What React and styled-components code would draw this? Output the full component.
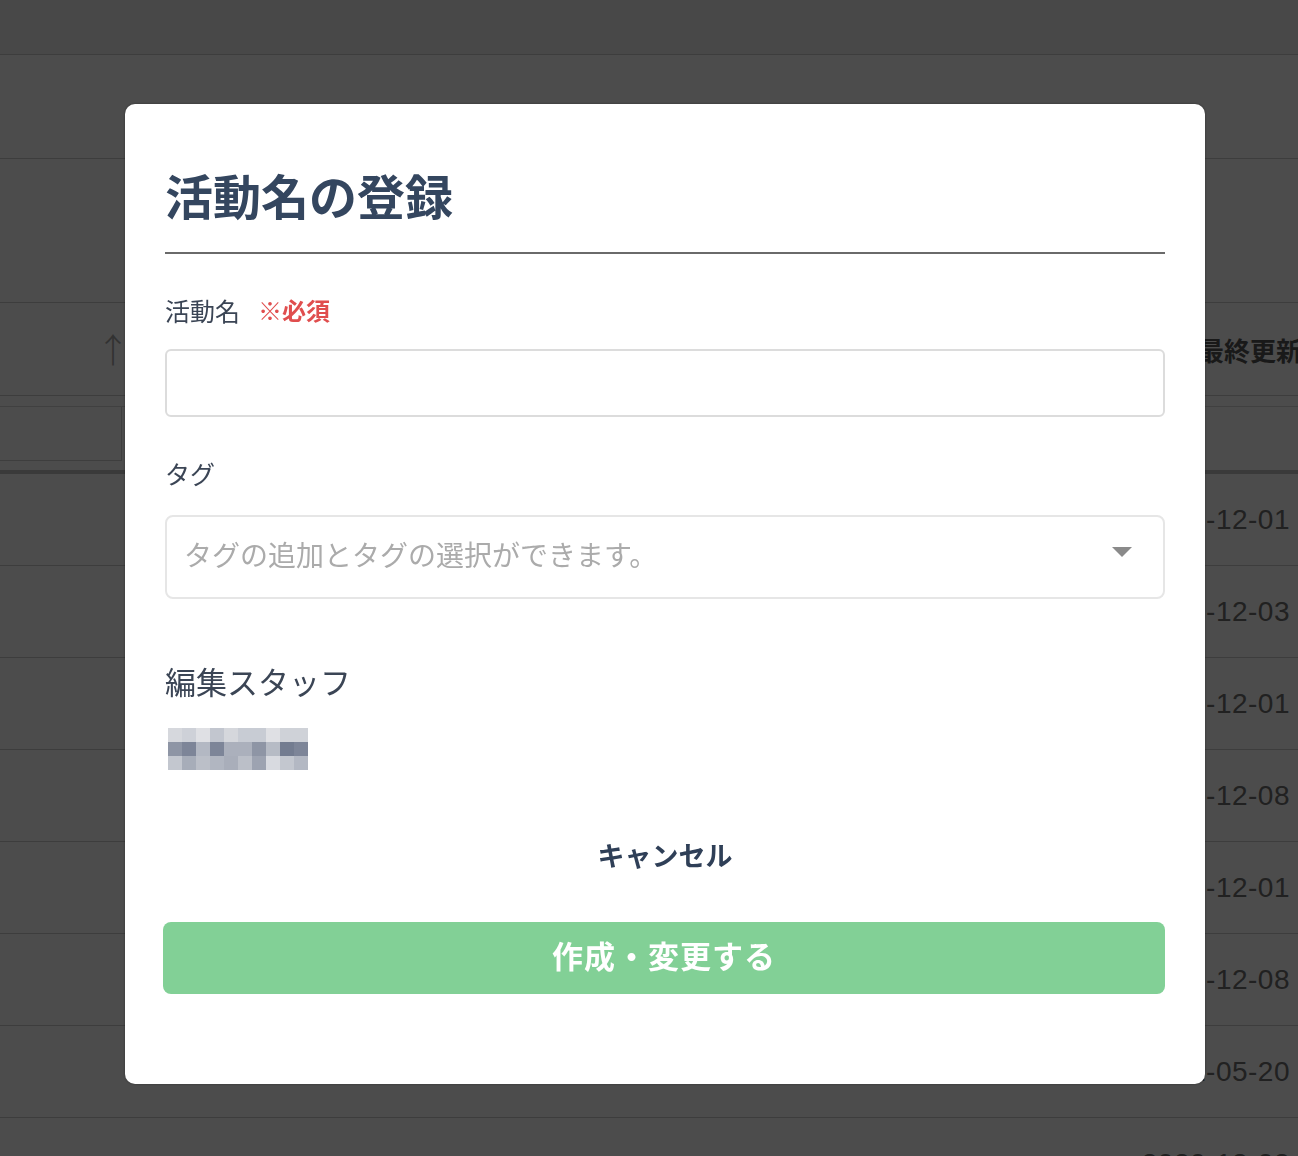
import React from "react";
import styled, { createGlobalStyle } from "styled-components";

const GlobalStyle = createGlobalStyle`
  html, body {
    margin: 0;
    padding: 0;
    overflow: hidden;
    background: #fff;
    font-family: "Noto Sans CJK JP", "Noto Sans", sans-serif;
  }
  * { box-sizing: border-box; }
`;

const dates = [
  "2020-12-01",
  "2020-12-03",
  "2020-12-01",
  "2020-12-08",
  "2020-12-01",
  "2020-12-08",
  "2021-05-20",
  "2020-12-02",
];

const pixels = [
  ["#d6d8dd", "#ced1d8", "#dfe0e4", "#c2c6cf", "#d5d7dc", "#c8ccd4", "#c8ccd4", "#dfe0e4", "#cfd2d8", "#cfd2d8"],
  ["#8e95a5", "#7d8598", "#b3b8c3", "#7d8598", "#abb0bc", "#abb0bc", "#8e95a5", "#b6bbc5", "#737c90", "#7d8598"],
  ["#c3c7cf", "#a7adb9", "#bbbfc8", "#b1b6c1", "#a9aeba", "#bbbfc8", "#9da3b1", "#d8dae0", "#c3c7cf", "#b3b8c3"],
];

const App = () => {
  return (
    <>
      <GlobalStyle />
      <Page>
        <TopBar />
        <Section $h={104} />
        <Section $h={144} />
        <HeaderRow>
          <SortCell>↑</SortCell>
          <HeadLabel>最終更新日</HeadLabel>
        </HeaderRow>
        <FilterRow>
          <FilterBox />
        </FilterRow>
        {dates.map((d, i) => (
          <DataRow key={i}>
            <DateText>{d}</DateText>
          </DataRow>
        ))}
      </Page>

      <Overlay>
        <Modal>
          <Title>活動名の登録</Title>
          <Divider />
          <Label>
            活動名<Required>※必須</Required>
          </Label>
          <TextInput type="text" />
          <Label $mt={38}>タグ</Label>
          <Select>
            <Placeholder>タグの追加とタグの選択ができます。</Placeholder>
            <svg width="20" height="10" viewBox="0 0 20 10">
              <polygon points="0,0 20,0 10,10" fill="#8a8a8a" />
            </svg>
          </Select>
          <StaffTitle>編集スタッフ</StaffTitle>
          <Mosaic>
            {pixels.map((row, r) =>
              row.map((c, k) => <Pixel key={r + "-" + k} $c={c} />)
            )}
          </Mosaic>
          <Cancel>キャンセル</Cancel>
          <Submit>作成・変更する</Submit>
        </Modal>
      </Overlay>
    </>
  );
};

export default App;

const Page = styled.div`
  width: 100%;
  height: 100vh;
  overflow: hidden;
  display: flex;
  flex-direction: column;
`;

const TopBar = styled.div`
  height: 55px;
  flex-shrink: 0;
  background: #f0f0f0;
  border-bottom: 1px solid #cdcdcd;
`;

const Section = styled.div`
  height: ${(p) => p.$h}px;
  flex-shrink: 0;
  border-bottom: 1px solid #cdcdcd;
`;

const HeaderRow = styled.div`
  height: 93px;
  flex-shrink: 0;
  display: flex;
  align-items: center;
  border-bottom: 1px solid #cdcdcd;
`;

const SortCell = styled.div`
  width: 130px;
  text-align: right;
  font-family: "Noto Sans CJK JP", sans-serif;
  font-weight: 300;
  font-size: 34px;
  line-height: 1;
  color: #a8a8a8;
`;

const HeadLabel = styled.div`
  margin-left: auto;
  width: 100px;
  white-space: nowrap;
  overflow: hidden;
  font-size: 26px;
  font-weight: 700;
  color: #555;
`;

const FilterRow = styled.div`
  height: 68px;
  flex-shrink: 0;
  margin-top: 10px;
  border-top: 1px solid #d8d8d8;
  border-bottom: 4px solid #c2c2c2;
`;

const FilterBox = styled.div`
  width: 122px;
  height: 54px;
  border: 1px solid #d0d0d0;
  border-left: none;
  border-top: none;
`;

const DataRow = styled.div`
  height: 92px;
  flex-shrink: 0;
  display: flex;
  align-items: center;
  justify-content: flex-end;
  padding-right: 8px;
  border-bottom: 1px solid #cdcdcd;
`;

const DateText = styled.span`
  font-family: "Liberation Sans", Arial, sans-serif;
  font-size: 28px;
  letter-spacing: 0.5px;
  color: #6e6e6e;
`;

const Overlay = styled.div`
  position: fixed;
  inset: 0;
  background: rgba(0, 0, 0, 0.7);
  padding: 104px 0 0 125px;
`;

const Modal = styled.div`
  width: 1080px;
  height: 980px;
  background: #fff;
  border-radius: 10px;
  box-shadow: 0 0 3px rgba(0, 0, 0, 0.35);
  padding: 54px 40px 90px;
  display: flex;
  flex-direction: column;
`;

const Title = styled.h1`
  margin: 0;
  height: 72px;
  line-height: 72px;
  font-size: 48px;
  font-weight: 700;
  color: #34465f;
`;

const Divider = styled.div`
  margin-top: 22px;
  height: 2px;
  background: #6a6a6a;
`;

const Label = styled.div`
  margin-top: ${(p) => p.$mt ?? 38}px;
  height: 36px;
  line-height: 36px;
  font-size: 25px;
  color: #3b4555;
  display: flex;
  align-items: center;
`;

const Required = styled.span`
  margin-left: 18px;
  font-size: 24px;
  font-weight: 700;
  color: #e04e4e;
`;

const TextInput = styled.input`
  margin-top: 21px;
  height: 68px;
  width: 100%;
  border: 2px solid #dcdcdc;
  border-radius: 6px;
  outline: none;
  padding: 0 18px;
  font-size: 24px;
`;

const Select = styled.div`
  margin-top: 24px;
  height: 84px;
  border: 2px solid #e6e6e6;
  border-radius: 8px;
  padding: 0 31px 0 17px;
  display: flex;
  align-items: center;
  justify-content: space-between;

  svg {
    margin-top: -10px;
  }
`;

const Placeholder = styled.span`
  font-size: 28px;
  line-height: 1;
  margin-top: -6px;
  color: #ababab;
`;

const StaffTitle = styled.div`
  margin-top: 60px;
  height: 44px;
  line-height: 44px;
  font-size: 31px;
  color: #3b4555;
`;

const Mosaic = styled.div`
  margin-top: 25px;
  margin-left: 3px;
  display: grid;
  grid-template-columns: repeat(10, 14px);
  grid-template-rows: repeat(3, 14px);
  width: 140px;
`;

const Pixel = styled.div`
  background: ${(p) => p.$c};
`;

const Cancel = styled.div`
  margin-top: 65px;
  height: 40px;
  line-height: 40px;
  text-align: center;
  font-size: 27px;
  font-weight: 700;
  color: #2f3f57;
`;

const Submit = styled.button`
  margin: 47px 0 0 -2px;
  height: 72px;
  width: calc(100% + 2px);
  border: none;
  border-radius: 8px;
  background: #82d096;
  color: #fff;
  padding: 0 0 8px;
  font-family: "Noto Sans CJK JP", sans-serif;
  font-size: 31px;
  font-weight: 700;
  letter-spacing: 1px;
`;
